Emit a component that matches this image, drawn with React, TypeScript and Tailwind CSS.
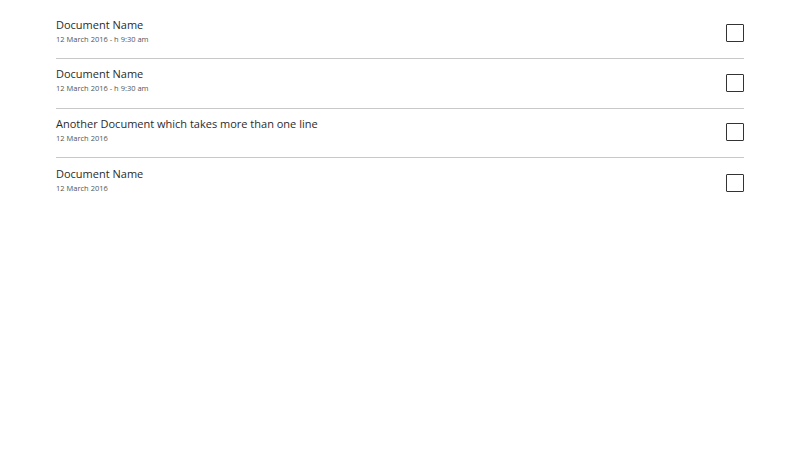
import React from "react";

type Doc = { title: string; date: string };

const docs: Doc[] = [
  { title: "Document Name", date: "12 March 2016 - h 9:30 am" },
  { title: "Document Name", date: "12 March 2016 - h 9:30 am" },
  { title: "Another Document which takes more than one line", date: "12 March 2016" },
  { title: "Document Name", date: "12 March 2016" },
];

export default function App() {
  return (
    <div
      className="w-[800px] h-[450px] bg-white text-[#333]"
      style={{ fontFamily: '"Open Sans", "Noto Sans", sans-serif' }}
    >
      <ul className="mx-[56px] pt-[9.5px]">
        {docs.map((d, i) => (
          <li
            key={i}
            className={`flex items-center justify-between h-[49.6px] ${
              i < docs.length - 1 ? "border-b border-[#c8c8c8]" : ""
            }`}
          >
            <div className="flex flex-col mb-[5px]">
              <span className="text-[11px] leading-[15px] text-[#2b2b2b]">{d.title}</span>
              <span className="text-[7.5px] leading-[14px] text-[#555]">{d.date}</span>
            </div>
            <span className="w-[18px] h-[18px] mb-[1px] border-[1.5px] border-[#333] rounded-[1px]" />
          </li>
        ))}
      </ul>
    </div>
  );
}
